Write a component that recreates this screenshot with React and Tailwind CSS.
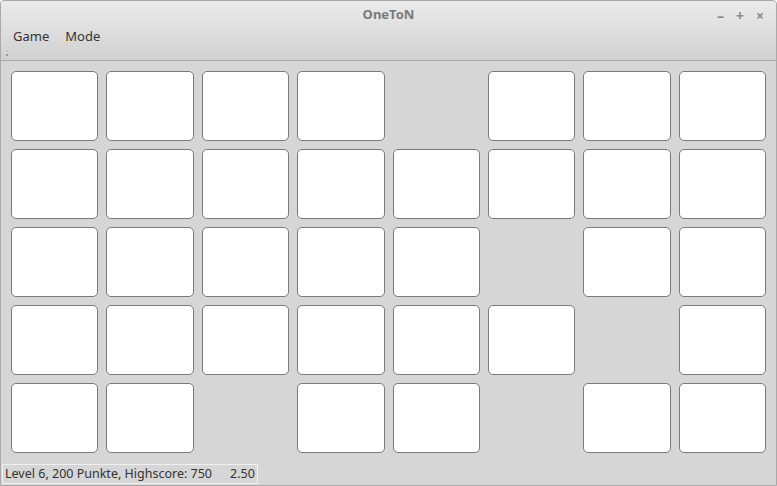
import React from 'react';

const LAYOUT = [
  [1, 1, 1, 1, 0, 1, 1, 1],
  [1, 1, 1, 1, 1, 1, 1, 1],
  [1, 1, 1, 1, 1, 0, 1, 1],
  [1, 1, 1, 1, 1, 1, 0, 1],
  [1, 1, 0, 1, 1, 0, 1, 1],
];

function Cell({ filled }) {
  if (!filled) return <div />;
  return <button className="rounded-[5px] border border-[#7b7b7b] bg-white" />;
}

export default function App() {
  return (
    <div
      className="w-[777px] h-[486px] flex flex-col bg-[#d6d6d6] border border-[#a9a9a9] rounded-t-[4px] overflow-hidden text-[#3c3c3c]"
      style={{ fontFamily: '"Noto Sans", "DejaVu Sans", sans-serif' }}
    >
      <div className="h-[60px] flex flex-col bg-gradient-to-b from-[#ebebeb] to-[#d1d1d1] border-b border-[#a6a6a6]">
        <div className="h-[27px] relative flex items-center justify-center">
          <span className="text-[13px] font-bold text-[#7a7a7a]">OneToN</span>
          <div className="absolute right-[12px] top-[4px] flex items-center gap-[12px] text-[#8a8a8a] text-[14px] font-bold">
            <span>–</span>
            <span>+</span>
            <span>×</span>
          </div>
        </div>
        <div className="flex items-center gap-[16px] pl-[12px] h-[18px] text-[13px] text-[#333]">
          <span>Game</span>
          <span>Mode</span>
        </div>
        <div className="pl-[5px] pt-[5px] flex flex-col gap-[2px]">
          <div className="w-[2px] h-[1px] bg-[#b8b8b8]" />
          <div className="w-[2px] h-[2px] bg-[#9a9a9a]" />
        </div>
      </div>
      <div className="flex-1 px-[10px] pt-[10px]">
        <div className="grid grid-cols-8 grid-rows-[repeat(5,70px)] gap-x-[8px] gap-y-[8px]">
          {LAYOUT.flat().map((v, i) => (
            <Cell key={i} filled={v} />
          ))}
        </div>
      </div>
      <div className="px-[1px] pb-[1px]">
        <div className="inline-flex items-center gap-[18px] h-[20px] px-[2px] border border-[#f0f0f0] text-[12.5px] text-[#333]">
          <span>Level 6, 200 Punkte, Highscore: 750</span>
          <span>2.50</span>
        </div>
      </div>
    </div>
  );
}
